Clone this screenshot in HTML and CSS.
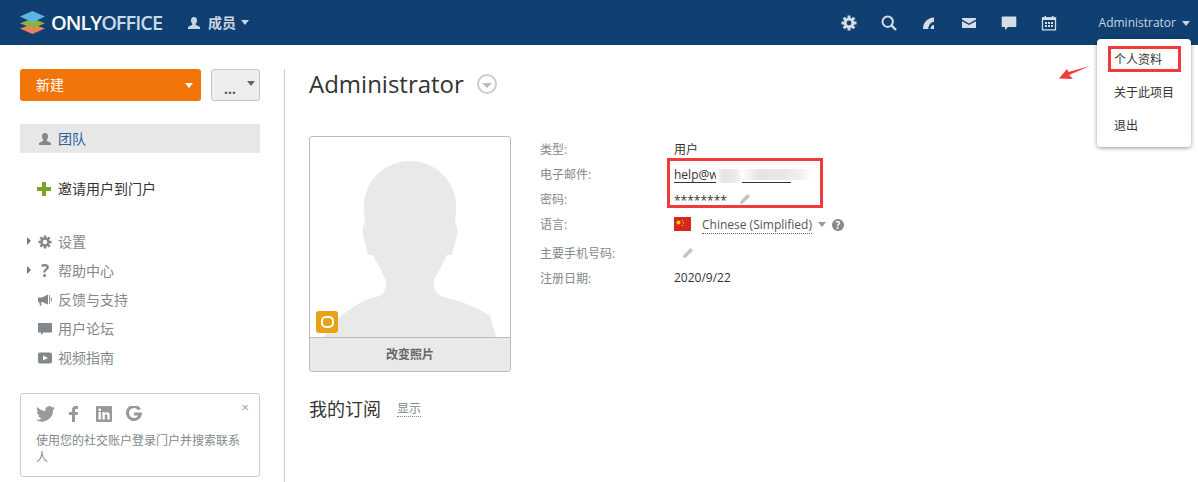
FILE: index.html
```html
<!DOCTYPE html>
<html lang="zh">
<head>
    <meta charset="UTF-8">
    <title>Administrator</title>
    <link rel="stylesheet" href="styles.css">
</head>
<body>
    <!-- Top bar -->
    <div class="topbar">
        <a class="logo">
            <svg class="logo-mark" viewBox="0 0 25 23" width="25" height="23">
                <path fill="#e8825c" d="M12.5 13 25 17.5 12.5 23 0 17.5z"/>
                <path fill="#8db33c" d="M12.5 7.5 25 12.2 12.5 17.6 0 12.2z"/>
                <path fill="#5db4e6" d="M12.5 0 25 5.5 12.5 11.5 0 5.5z"/>
            </svg>
            <span class="logo-text">ONLY<span class="logo-light">OFFICE</span></span>
        </a>
        <div class="module-menu">
            <svg class="icon-12" viewBox="0 0 12 12"><path fill="#c9d5e2" d="M6 0c2 0 3 1.500 3 3.500 0 1.500-.6 2.700-1.300 3.300v1L12 10v2H0v-2l4.300-2.200v-1C3.600 6.200 3 5 3 3.500 3 1.500 4 0 6 0z"/></svg>
            <span>成员</span>
            <i class="caret caret-top"></i>
        </div>
        <div class="top-icons">
            <svg class="top-icon" viewBox="0 0 16 16">
                <g stroke="#d5deE8" stroke-width="3"><path d="M8 .5v15M.5 8h15M2.700 2.700l10.600 10.600M13.300 2.700 2.700 13.300"/></g>
                <circle cx="8" cy="8" r="5.300" fill="#d5dee8"/><circle cx="8" cy="8" r="2.400" fill="#0f4071"/>
            </svg>
            <svg class="top-icon" viewBox="0 0 16 16"><circle cx="6.700" cy="6.700" r="5.200" fill="none" stroke="#d5dee8" stroke-width="2"/><path d="m10.500 10.500 4.500 4.500" stroke="#d5dee8" stroke-width="2.400"/></svg>
            <svg class="top-icon" viewBox="0 0 16 16"><path fill="#d5dee8" d="M2 14C2 7 7 3 13 2.500v4.300C10 7 7.500 10 7.300 14z"/><path fill="#d5dee8" d="M9.500 14c0-2 1.500-4 3.500-4.200V14z"/></svg>
            <svg class="top-icon" viewBox="0 0 16 16"><path fill="#d5dee8" d="M1 3h14v1.500L8 8.500 1 4.500zM1 6.200 8 10l7-3.800V13H1z"/></svg>
            <svg class="top-icon" viewBox="0 0 16 16"><path fill="#d5dee8" d="M1.500 1.500h13a.8.800 0 0 1 .8.800v9a.8.800 0 0 1-.8.800H7l-3 3v-3H1.500a.8.800 0 0 1-.8-.8v-9a.8.800 0 0 1 .8-.8z"/></svg>
            <svg class="top-icon" viewBox="0 0 16 16"><path fill="none" stroke="#d5dee8" stroke-width="1.300" d="M1.500 2.800h13v12h-13z"/><path fill="#d5dee8" d="M1.500 2.500h13v2.500h-13zM3.500 1h1.500v2H3.500zM11 1h1.500v2H11zM4 7h2v2H4zM7 7h2v2H7zM10 7h2v2h-2zM4 10h2v2H4zM7 10h2v2H7zM10 10h2v2h-2z"/></svg>
        </div>
        <div class="user-menu">
            <span>Administrator</span>
            <i class="caret caret-top"></i>
        </div>
    </div>

    <div class="page">
        <!-- Sidebar -->
        <div class="sidebar">
            <div class="button-row">
                <button class="btn-new"><span>新建</span><i class="caret caret-white"></i></button>
                <button class="btn-more"><span>...</span><i class="caret caret-dark"></i></button>
            </div>

            <div class="team-row">
                <svg class="icon-12" viewBox="0 0 12 12"><path fill="#83888d" d="M6 0c2 0 3 1.500 3 3.500 0 1.500-.6 2.700-1.300 3.300v1L12 10v2H0v-2l4.300-2.200v-1C3.600 6.200 3 5 3 3.500 3 1.500 4 0 6 0z"/></svg>
                <span>团队</span>
            </div>

            <div class="invite-row">
                <svg class="icon-14" viewBox="0 0 14 14"><path fill="#7ba428" d="M5 0h4v5h5v4H9v5H5V9H0V5h5z"/></svg>
                <span>邀请用户到门户</span>
            </div>

            <ul class="nav-list">
                <li>
                    <i class="arrow-right"></i>
                    <svg class="icon-14" viewBox="0 0 16 16">
                        <g stroke="#83888d" stroke-width="3"><path d="M8 .5v15M.5 8h15M2.700 2.700l10.600 10.600M13.300 2.700 2.700 13.300"/></g>
                        <circle cx="8" cy="8" r="5.300" fill="#83888d"/><circle cx="8" cy="8" r="2.600" fill="#fff"/>
                    </svg>
                    <span>设置</span>
                </li>
                <li>
                    <i class="arrow-right"></i>
                    <span class="help-mark">?</span>
                    <span>帮助中心</span>
                </li>
                <li>
                    <svg class="icon-14" viewBox="0 0 14 14"><path fill="#83888d" d="M0 4.500h4L10 1.500v10l-6-2.500H3l.8 3.500H2L1 9H0zM11 2h.8v9H11zM12.800 4.500h1v4h-1z"/></svg>
                    <span>反馈与支持</span>
                </li>
                <li>
                    <svg class="icon-14" viewBox="0 0 14 14"><path fill="#83888d" d="M.5 1h13a.5.500 0 0 1 .5.500v8.500a.5.500 0 0 1-.5.500H5.500L3 13v-2.500H.5A.5.500 0 0 1 0 10V1.500A.5.500 0 0 1 .5 1z"/></svg>
                    <span>用户论坛</span>
                </li>
                <li>
                    <svg class="icon-14" viewBox="0 0 14 14"><path fill="#83888d" fill-rule="evenodd" d="M2 1.500h10a2 2 0 0 1 2 2v7a2 2 0 0 1-2 2H2a2 2 0 0 1-2-2v-7a2 2 0 0 1 2-2zM5 4.500v5L10 7z"/></svg>
                    <span>视频指南</span>
                </li>
            </ul>

            <div class="social-box">
                <span class="social-close">×</span>
                <div class="social-icons">
                    <svg width="19" height="16" viewBox="0 0 19 16"><path fill="#999" d="M19 2c-.7.300-1.400.500-2.200.600.800-.5 1.400-1.200 1.700-2.100-.7.400-1.500.8-2.400 1A3.900 3.900 0 0 0 9.400 5C6.200 4.800 3.300 3.300 1.300.9.300 2.700.800 4.900 2.500 6c-.6 0-1.200-.2-1.700-.5 0 1.900 1.300 3.500 3.100 3.900-.6.200-1.200.2-1.800.1.500 1.600 2 2.700 3.700 2.700A7.900 7.900 0 0 1 0 13.800 11 11 0 0 0 17 4c.8-.5 1.500-1.200 2-2z"/></svg>
                    <svg width="10" height="16" viewBox="0 0 10 16"><path fill="#999" d="M3 16V9H0V6h3V4c0-2.600 1.500-4 3.800-4 1.100 0 2 .1 2.200.1V3H7.500C6.300 3 6 3.600 6 4.400V6h3l-.4 3H6v7z"/></svg>
                    <svg class="social-in" width="16" height="16" viewBox="0 0 16 16"><path fill="#999" fill-rule="evenodd" d="M1 0h14a1 1 0 0 1 1 1v14a1 1 0 0 1-1 1H1a1 1 0 0 1-1-1V1a1 1 0 0 1 1-1zM2.500 6v7.500h2.400V6zM3.700 2.400a1.400 1.400 0 1 0 0 2.800 1.400 1.400 0 0 0 0-2.800zM6.400 6v7.500h2.400V9.700c0-2 2.500-2.100 2.500 0v3.800h2.400V9c0-3.500-3.800-3.400-4.900-1.700V6z"/></svg>
                    <svg width="16" height="16" viewBox="0 0 16 16"><path fill="none" stroke="#999" stroke-width="3" d="M13.500 3.500A6.500 6.500 0 1 0 14.400 8H8"/></svg>
                </div>
                <p>使用您的社交账户登录门户并搜索联系人</p>
            </div>
        </div>

        <!-- Profile -->
        <div class="content">
            <div class="title-row">
                <h1>Administrator</h1>
                <span class="title-circle"><i class="caret caret-grey"></i></span>
            </div>

            <div class="profile">
                <div class="photo-box">
                    <div class="photo">
                        <svg class="silhouette" viewBox="0 0 200 200" width="200" height="200">
                            <path fill="#e9e9e9" d="M14 200C26 180 46 165 66 160 74 158 77 151 76 143L63 118 58 118 53 98C52 92 53 88 55 86 54 80 54 72 54 66 56 42 76 24 100 24S144 42 146 66C146 72 146 80 145 86 147 88 148 92 147 98L142 118 137 118 124 143C123 151 126 158 134 160 154 165 168 171 180 179L186 200z"/>
                        </svg>
                        <span class="owner-badge"><i></i></span>
                    </div>
                    <div class="photo-change">改变照片</div>
                </div>

                <div class="details">
                    <div class="detail-row"><span class="detail-label">类型:</span><span>用户</span></div>
                    <div class="detail-row"><span class="detail-label">电子邮件:</span><a class="mail-link">help@w<span class="mail-rest"></span></a></div>
                    <div class="detail-row"><span class="detail-label">密码:</span><span class="stars">********</span>
                        <svg class="pencil" viewBox="0 0 12 12"><path fill="#c4c4c4" d="M8.500 1 11 3.500 4 10.500 1 11l.5-3z"/></svg>
                    </div>
                    <div class="detail-row"><span class="detail-label">语言:</span>
                        <svg class="flag" viewBox="0 0 17 14"><rect width="17" height="14" fill="#d8261c"/><circle cx="4.500" cy="5.500" r="2" fill="#f6d21e"/><circle cx="8.500" cy="3.500" r=".7" fill="#f6d21e"/><circle cx="9.500" cy="6" r=".7" fill="#f6d21e"/><circle cx="8.500" cy="8.500" r=".7" fill="#f6d21e"/></svg>
                        <span class="lang-name">Chinese (Simplified)</span>
                        <i class="caret caret-lang"></i>
                        <span class="help-circle">?</span>
                    </div>
                    <div class="detail-row row-phone"><span class="detail-label">主要手机号码:</span>
                        <svg class="pencil pencil-phone" viewBox="0 0 12 12"><path fill="#c4c4c4" d="M8.500 1 11 3.500 4 10.500 1 11l.5-3z"/></svg>
                    </div>
                    <div class="detail-row"><span class="detail-label">注册日期:</span><span>2020/9/22</span></div>
                </div>
            </div>

            <div class="subscriptions">
                <h2>我的订阅</h2>
                <a class="show-link">显示</a>
            </div>
        </div>
    </div>

    <!-- Dropdown over the page -->
    <div class="dropdown">
        <div class="dropdown-item">个人资料</div>
        <div class="dropdown-item">关于此项目</div>
        <div class="dropdown-item">退出</div>
    </div>

    <!-- Markup drawn on the screenshot -->
    <div class="mark-box mark-menu"></div>
    <div class="mark-box mark-mail"></div>
    <svg class="mark-arrow" viewBox="0 0 32 14" width="32" height="14"><path fill="#f33a3a" d="M31 0 10 9 14 13 0 12.500 8 3 9.500 6z"/></svg>
    <div class="blur blur-a"></div>
    <div class="blur blur-b"></div>
</body>
</html>
```

FILE: styles.css
```css
* {
    box-sizing: border-box;
}
body {
    margin: 0;
    height: 482px;
    overflow: hidden;
    position: relative;
    font-family: "Open Sans", "Noto Sans CJK SC", sans-serif;
    font-size: 12px;
    color: #333;
    background: #fff;
}
ul {
    list-style: none;
    margin: 0;
    padding: 0;
}

/* Top bar */
.topbar {
    display: flex;
    align-items: center;
    height: 45px;
    padding-left: 20px;
    background: #0f4071;
    color: #c9d5e2;
}
.logo {
    display: flex;
    align-items: center;
    gap: 6px;
    width: 168px;
}
.logo-text {
    font-size: 20px;
    font-weight: 600;
    letter-spacing: -1px;
    color: #fff;
}
.logo-light {
    color: #c9d9e8;
}
.module-menu {
    display: flex;
    align-items: center;
    font-size: 14px;
    font-weight: 700;
}
.module-menu span {
    margin-left: 8px;
    margin-top: -2px;
}
.icon-12 {
    width: 12px;
    height: 12px;
    flex: none;
}
.icon-14 {
    width: 14px;
    height: 14px;
    flex: none;
}
.caret {
    display: inline-block;
    width: 0;
    height: 0;
    border-left: 5px solid transparent;
    border-right: 5px solid transparent;
    border-top: 5px solid #c9d5e2;
}
.caret-top {
    margin-left: 5px;
    border-left-width: 4.5px;
    border-right-width: 4.5px;
}
.top-icons {
    display: flex;
    gap: 24px;
    margin-left: auto;
    margin-right: 42px;
}
.top-icon {
    width: 16px;
    height: 16px;
}
.user-menu {
    display: flex;
    align-items: center;
    margin-right: 8px;
}
.user-menu .caret {
    margin-left: 6px;
    margin-top: 2px;
}

/* Page */
.page {
    display: flex;
    height: 437px;
    padding-top: 24px;
}
.sidebar {
    width: 265px;
    margin-left: 20px;
    border-right: 1px solid #ccc;
}
.button-row {
    display: flex;
    gap: 10px;
    width: 240px;
}
.btn-new {
    display: flex;
    align-items: center;
    justify-content: space-between;
    width: 181px;
    height: 32px;
    padding: 0 8px 0 16px;
    border: none;
    border-radius: 3px;
    background: #f27509;
    color: #fff;
    font-family: inherit;
    font-size: 14px;
}
.btn-new span {
    margin-top: -3px;
}
.caret-white {
    border-top-color: #fff;
    border-left-width: 4px;
    border-right-width: 4px;
}
.btn-more {
    display: flex;
    align-items: center;
    justify-content: space-between;
    width: 49px;
    height: 32px;
    padding: 0 4px 0 12px;
    border: 1px solid #c4c4c4;
    border-radius: 3px;
    background: #eee;
    color: #555;
    font-family: inherit;
    font-size: 14px;
    font-weight: 700;
}
.btn-more span {
    margin-top: 6px;
}
.caret-dark {
    border-top-color: #666;
    border-left-width: 4px;
    border-right-width: 4px;
    margin-top: -4px;
}
.team-row {
    display: flex;
    align-items: center;
    gap: 7px;
    width: 240px;
    height: 29px;
    margin-top: 23px;
    padding-left: 19px;
    background: #e7e7e8;
    color: #2b5f9e;
    font-size: 14px;
}
.team-row span,
.invite-row span,
.nav-list li span {
    margin-top: -2px;
}
.invite-row {
    display: flex;
    align-items: center;
    gap: 7px;
    height: 20px;
    margin-top: 26px;
    padding-left: 17px;
    color: #333;
    font-size: 14px;
}
.nav-list {
    margin-top: 28px;
}
.nav-list li {
    display: flex;
    align-items: center;
    gap: 6px;
    height: 29px;
    padding-left: 18px;
    color: #83888d;
    font-size: 14px;
    position: relative;
}
.arrow-right {
    position: absolute;
    left: 7px;
    top: 10px;
    width: 0;
    height: 0;
    border-top: 4px solid transparent;
    border-bottom: 4px solid transparent;
    border-left: 4px solid #777;
}
.nav-list li .help-mark {
    width: 14px;
    flex: none;
    margin-top: 0;
    text-align: center;
    font-size: 17px;
    font-weight: 700;
    line-height: 1;
}
.social-box {
    position: relative;
    width: 240px;
    height: 84px;
    margin-top: 21px;
    padding: 11px 15px 0;
    border: 1px solid #ccc;
    border-radius: 3px;
    color: #83888d;
}
.social-close {
    position: absolute;
    right: 10px;
    top: 4px;
    font-size: 13px;
    color: #999;
}
.social-icons {
    display: flex;
    align-items: center;
    gap: 14px;
    height: 18px;
}
.social-in {
    margin-left: 3px;
}
.social-box p {
    margin: 9px 0 0;
    line-height: 17px;
}

/* Profile */
.content {
    padding-left: 24px;
    flex: 1;
}
.title-row {
    display: flex;
    align-items: center;
    gap: 13px;
    height: 30px;
}
h1 {
    margin: -2px 0 0;
    font-size: 24px;
    font-weight: 400;
    color: #333;
}
.title-circle {
    display: flex;
    align-items: center;
    justify-content: center;
    width: 20px;
    height: 20px;
    border: 2px solid #ccc;
    border-radius: 50%;
}
.caret-grey {
    border-top-color: #bbb;
    margin-top: 2px;
}
.profile {
    display: flex;
    margin-top: 37px;
}
.photo-box {
    width: 202px;
    height: 236px;
    border: 1px solid #bbb;
    border-radius: 3px;
    overflow: hidden;
}
.photo {
    position: relative;
    height: 200px;
}
.silhouette {
    display: block;
}
.owner-badge {
    position: absolute;
    left: 6px;
    bottom: 4px;
    display: flex;
    align-items: center;
    justify-content: center;
    width: 22px;
    height: 22px;
    border-radius: 3px;
    background: #e8a314;
}
.owner-badge i {
    width: 13px;
    height: 12px;
    border: 2.5px solid #fff;
    border-radius: 5px;
}
.photo-change {
    height: 34px;
    border-top: 1px solid #bbb;
    background: #e9e9e9;
    color: #666;
    font-weight: 700;
    line-height: 33px;
    text-align: center;
}
.details {
    margin-left: 29px;
}
.detail-row {
    display: flex;
    align-items: center;
    height: 25px;
}
.row-phone {
    margin-top: 4px;
}
.detail-label {
    width: 134px;
    flex: none;
    color: #83888d;
}
.mail-link {
    width: 117px;
    margin-top: 2px;
    color: #333;
    border-bottom: 1px solid #333;
    line-height: 15px;
}
.stars {
    margin-top: 4px;
    font-size: 12px;
}
.pencil {
    width: 12px;
    height: 12px;
    margin-left: 12px;
}
.pencil-phone {
    margin-left: 8px;
}
.flag {
    width: 17px;
    height: 14px;
    margin-right: 11px;
}
.lang-name {
    margin-top: 4px;
    color: #555;
    border-bottom: 1px dotted #666;
    line-height: 16px;
}
.caret-lang {
    border-top-color: #999;
    border-left-width: 4px;
    border-right-width: 4px;
    margin-left: 6px;
    margin-top: 2px;
}
.help-circle {
    width: 12px;
    height: 12px;
    margin-left: 6px;
    margin-top: 2px;
    border-radius: 50%;
    background: #83888d;
    color: #fff;
    font-size: 10px;
    font-weight: 700;
    line-height: 12px;
    text-align: center;
}
.subscriptions {
    display: flex;
    align-items: center;
    gap: 16px;
    margin-top: 23px;
}
h2 {
    margin: 0;
    font-size: 18px;
    font-weight: 400;
    color: #333;
}
.show-link {
    margin-top: 2px;
    color: #83888d;
    border-bottom: 1px dotted #83888d;
    line-height: 15px;
}

/* Dropdown */
.dropdown {
    position: absolute;
    left: 1097px;
    top: 39px;
    width: 94px;
    height: 108px;
    padding-top: 4px;
    background: #fff;
    border-radius: 4px;
    box-shadow: 0 1px 4px rgba(0, 0, 0, 0.4);
}
.dropdown-item {
    height: 33px;
    padding-left: 17px;
    line-height: 33px;
    color: #333;
}

/* Screenshot markup */
.mark-box {
    position: absolute;
    border: 3px solid #f33a3a;
}
.mark-menu {
    left: 1108px;
    top: 46px;
    width: 73px;
    height: 26px;
}
.mark-mail {
    left: 667px;
    top: 158px;
    width: 156px;
    height: 50px;
}
.mark-arrow {
    position: absolute;
    left: 1059px;
    top: 66px;
}
.blur {
    position: absolute;
    background: linear-gradient(90deg, #fff, #e4e4e4 25%, #e8e8e8 60%, #f0f0f0 85%, #fff);
}
.blur-a {
    left: 716px;
    top: 169px;
    width: 26px;
    height: 14px;
}
.blur-b {
    left: 741px;
    top: 169px;
    width: 70px;
    height: 11px;
}
```
